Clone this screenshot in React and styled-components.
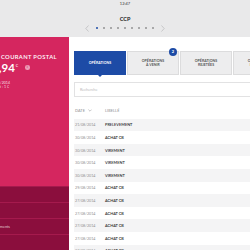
import styled, { createGlobalStyle } from "styled-components";

const GlobalStyle = createGlobalStyle`
  html, body {
    margin: 0;
    padding: 0;
    overflow: hidden;
    background: #ffffff;
  }
  body {
    font-family: Lato, "Open Sans", sans-serif;
  }
`;

const Page = styled.div`
  width: 250px;
  height: 250px;
  display: flex;
  flex-direction: column;
  overflow: hidden;
`;

const TopBar = styled.div`
  height: 37px;
  flex-shrink: 0;
  background: #e9e9ea;
  display: flex;
  flex-direction: column;
  align-items: center;
`;

const Clock = styled.div`
  margin-top: 1px;
  font-size: 4px;
  line-height: 5px;
  color: #333;
`;

const Title = styled.div`
  margin-top: 10px;
  font-size: 5.5px;
  line-height: 6px;
  font-weight: 700;
  color: #222;
`;

const Pager = styled.div`
  margin-top: 3px;
  display: flex;
  align-items: center;
  gap: 5.4px;
  height: 6px;
`;

const Chevron = styled.svg`
  width: 4px;
  height: 7px;
  margin: 0 2px;
`;

const Dot = styled.span`
  width: ${(p) => (p.$active ? "2px" : "1.6px")};
  height: ${(p) => (p.$active ? "2px" : "1.6px")};
  border-radius: 50%;
  background: ${(p) => (p.$active ? "#1d4ba6" : "#9a9a9c")};
`;

const Main = styled.div`
  flex: 1;
  display: flex;
  min-height: 0;
`;

const Side = styled.div`
  width: 69px;
  flex-shrink: 0;
  background: #d5265f;
  display: flex;
  flex-direction: column;
  overflow: hidden;
  color: #fff;
`;

/* the side panel is cut on its left in the view: each line ends at a set x and overflows to the left */
const Clip = styled.div`
  width: ${(p) => p.$end}px;
  flex-shrink: 0;
  display: flex;
  justify-content: flex-end;
  white-space: nowrap;
`;

const AccountName = styled.div`
  margin-top: 17px;
  padding-left: 1px;
  white-space: nowrap;
  font-size: 5.8px;
  line-height: 6px;
  letter-spacing: 0.35px;
  font-weight: 600;
`;

const BalanceRow = styled.div`
  margin-top: 1px;
  display: flex;
  align-items: center;
  height: 12px;
`;

const Balance = styled.span`
  font-size: 11.5px;
  line-height: 12px;
  font-weight: 700;
  sup {
    font-size: 4.5px;
    font-weight: 400;
    vertical-align: 5px;
    margin-left: 0.5px;
  }
`;

const InfoIcon = styled.span`
  margin-left: 7px;
  margin-top: 1px;
  width: 4.5px;
  height: 4.5px;
  border-radius: 50%;
  background: rgba(255, 255, 255, 0.55);
  color: #d5265f;
  font-size: 3.6px;
  line-height: 4.5px;
  text-align: center;
  font-weight: 700;
`;

const SmallLine = styled.div`
  margin-top: ${(p) => p.$gap || 0}px;
  display: flex;
  font-size: 3.6px;
  line-height: 4.4px;
  color: rgba(255, 255, 255, 0.85);
`;

const SideList = styled.div`
  margin-top: auto;
  display: flex;
  flex-direction: column;
`;

const SideItem = styled.div`
  height: 15px;
  background: #8b0e3d;
  border-top: 1px solid #a51a4d;
  display: flex;
  align-items: center;
  font-size: 3.8px;
  color: rgba(255, 255, 255, 0.75);
  overflow: hidden;
`;

const Content = styled.div`
  flex: 1;
  padding-left: 5px;
  display: flex;
  flex-direction: column;
  min-width: 0;
`;

const Tabs = styled.div`
  margin-top: 14px;
  height: 24px;
  display: flex;
  flex-shrink: 0;
`;

const Tab = styled.div`
  position: relative;
  width: 52px;
  flex-shrink: 0;
  margin-right: 1px;
  background: ${(p) => (p.$active ? "#1d4ba6" : "#ededee")};
  border: 1px solid ${(p) => (p.$active ? "#1d4ba6" : "#dcdcdd")};
  box-sizing: border-box;
  display: flex;
  align-items: center;
  justify-content: center;
  text-align: center;
  font-size: 3.5px;
  line-height: 4.4px;
  font-weight: 700;
  letter-spacing: 0.05px;
  color: ${(p) => (p.$active ? "#ffffff" : "#555")};

  &::after {
    content: "";
    display: ${(p) => (p.$active ? "block" : "none")};
    position: absolute;
    left: 50%;
    bottom: -3px;
    margin-left: -3px;
    border-left: 3px solid transparent;
    border-right: 3px solid transparent;
    border-top: 3px solid #1d4ba6;
  }
`;

const Badge = styled.span`
  position: absolute;
  top: -4px;
  right: 1px;
  width: 8px;
  height: 8px;
  border-radius: 50%;
  background: #1d4ba6;
  color: #fff;
  font-size: 4px;
  line-height: 8px;
  font-weight: 700;
`;

const Search = styled.div`
  margin-top: 7px;
  height: 15px;
  flex-shrink: 0;
  border: 1px solid #e2e2e3;
  border-right: none;
  box-sizing: border-box;
  display: flex;
  align-items: center;
  padding-left: 5px;
  font-size: 3.8px;
  color: #b9b9bb;
`;

const Header = styled.div`
  height: 21.7px;
  flex-shrink: 0;
  padding-top: 5px;
  box-sizing: border-box;
  display: flex;
  align-items: center;
  font-size: 3.8px;
  color: #8e8e90;
  letter-spacing: 0.1px;
`;

const DateCol = styled.span`
  width: 30px;
  padding-left: 1px;
  flex-shrink: 0;
  display: flex;
  align-items: center;
  gap: 3px;
`;

const Row = styled.div`
  height: 12.6px;
  flex-shrink: 0;
  display: flex;
  align-items: center;
  background: ${(p) => (p.$shade ? "#f4f4f5" : "#ffffff")};
`;

const RowDate = styled.span`
  width: 30px;
  padding-left: 1px;
  flex-shrink: 0;
  font-size: 3.7px;
  color: #909092;
`;

const RowLabel = styled.span`
  font-size: 3.9px;
  font-weight: 600;
  color: #2e2e30;
`;

const operations = [
  ["21/08/2014", "PRELEVEMENT"],
  ["30/08/2014", "ACHAT CB"],
  ["30/08/2014", "VIREMENT"],
  ["30/08/2014", "VIREMENT"],
  ["30/08/2014", "VIREMENT"],
  ["29/08/2014", "ACHAT CB"],
  ["27/08/2014", "ACHAT CB"],
  ["27/08/2014", "ACHAT CB"],
  ["27/08/2014", "ACHAT CB"],
  ["27/08/2014", "ACHAT CB"],
  ["27/08/2014", "ACHAT CB"],
];

export default function App() {
  return (
    <>
      <GlobalStyle />
      <Page>
        <TopBar>
          <Clock>12:47</Clock>
          <Title>CCP</Title>
          <Pager>
            <Chevron viewBox="0 0 4 7">
              <path d="M3.5 0.5 L0.8 3.5 L3.5 6.5" fill="none" stroke="#b0b0b2" strokeWidth="0.6" />
            </Chevron>
            {Array.from({ length: 9 }).map((_, i) => (
              <Dot key={i} $active={i === 0} />
            ))}
            <Chevron viewBox="0 0 4 7">
              <path d="M0.5 0.5 L3.2 3.5 L0.5 6.5" fill="none" stroke="#b0b0b2" strokeWidth="0.6" />
            </Chevron>
          </Pager>
        </TopBar>
        <Main>
          <Side>
            <AccountName>COURANT POSTAL</AccountName>
            <BalanceRow>
              <Clip $end={18}>
                <Balance>
                  1 234,94<sup>€</sup>
                </Balance>
              </Clip>
              <InfoIcon>i</InfoIcon>
            </BalanceRow>
            <SmallLine $gap={7.5}>
              <Clip $end={10}>au 31/08/2014</Clip>
            </SmallLine>
            <SmallLine>
              <Clip $end={9}>Découvert : 1 €</Clip>
            </SmallLine>
            <SideList>
              <SideItem />
              <SideItem />
              <SideItem>
                <Clip $end={10}>Relevés et documents</Clip>
              </SideItem>
              <SideItem />
            </SideList>
          </Side>
          <Content>
            <Tabs>
              <Tab $active>OPÉRATIONS</Tab>
              <Tab>
                OPÉRATIONS
                <br />À VENIR
                <Badge>2</Badge>
              </Tab>
              <Tab>
                OPÉRATIONS
                <br />
                REJETÉES
              </Tab>
              <Tab>
                OPÉRATIONS
                <br />
                DIFFÉRÉES
              </Tab>
            </Tabs>
            <Search>Recherche</Search>
            <Header>
              <DateCol>
                DATE
                <svg width="4" height="3" viewBox="0 0 4 3">
                  <path d="M0.4 0.6 L2 2.2 L3.6 0.6" fill="none" stroke="#8e8e90" strokeWidth="0.5" />
                </svg>
              </DateCol>
              <span>LIBELLÉ</span>
            </Header>
            {operations.map(([date, label], i) => (
              <Row key={i} $shade={i % 2 === 0}>
                <RowDate>{date}</RowDate>
                <RowLabel>{label}</RowLabel>
              </Row>
            ))}
          </Content>
        </Main>
      </Page>
    </>
  );
}
